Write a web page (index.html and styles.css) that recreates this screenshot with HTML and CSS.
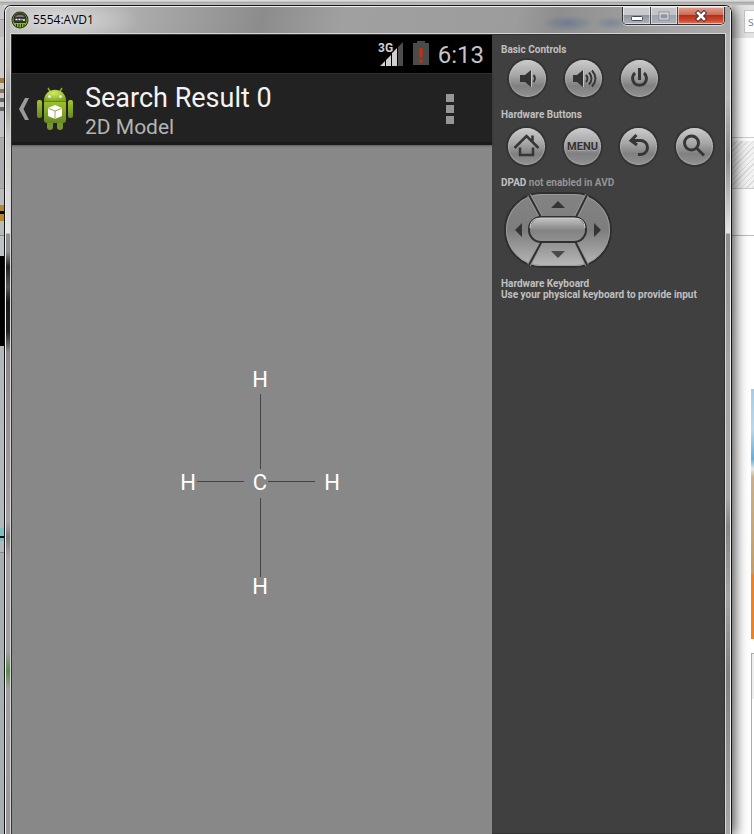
FILE: index.html
```html
<!DOCTYPE html>
<html lang="en">
<head>
<meta charset="utf-8">
<title>5554:AVD1</title>
<link rel="stylesheet" href="styles.css">
</head>
<body>
<div class="desktop">
  <div class="behind-top"></div>
  <div class="behind-left"></div>
  <main class="window">
    <div class="frame">
      <header class="titlebar">
        <svg class="app-icon" viewBox="0 0 18 18" aria-hidden="true">
          <circle cx="9" cy="9" r="8.5" fill="#26350c"/>
          <circle cx="9" cy="9" r="7.5" fill="#86b82a"/>
          <path d="M2.500 11V7.500a6.500 5.700 0 0 1 13 0V11z" fill="#333"/>
          <path d="M4 6a5.500 4 0 0 1 10 0z" fill="#777"/>
          <path d="M4.500 8.500h2M7.500 8.500h2M10.500 8.500h1M12 9h2" stroke="#fff" stroke-width="1.500"/>
          <path d="M3 11.500h12M5.500 13v3M8 13v3.500M10.500 13v3.500M13 13v3" stroke="#26350c" stroke-width="1"/>
        </svg>
        <h1 class="window-title">5554:AVD1</h1>
        <div class="window-buttons">
          <button class="wb wb-min" aria-label="Minimize"><svg viewBox="0 0 14 12"><rect x="1.500" y="6.500" width="11" height="4" rx="1" fill="#fff" stroke="#444b58"/></svg></button>
          <button class="wb wb-max" aria-label="Maximize"><svg viewBox="0 0 14 12"><rect x="2" y="2" width="10" height="8" fill="none" stroke="#858b95"/><rect x="3" y="3" width="8" height="6" fill="none" stroke="#d5d7db"/><rect x="5" y="5" width="4" height="2" fill="none" stroke="#858b95"/></svg></button>
          <button class="wb wb-close" aria-label="Close"><svg viewBox="0 0 14 12"><path d="M4 3l6 6M10 3l-6 6" stroke="#46313a" stroke-width="4.500" stroke-linecap="square"/><path d="M4 3l6 6M10 3l-6 6" stroke="#fff" stroke-width="2.500" stroke-linecap="square"/></svg></button>
        </div>
      </header>
      <div class="client">
        <section class="phone">
          <div class="statusbar">
            <svg class="signal" viewBox="0 0 26 26" aria-label="3G signal">
              <path d="M25 1v24h-5V6z" fill="#4d4d4d"/>
              <path d="M2 25l5-5v5zM8 25v-6l5-5v11zM14 25V12l5-5v18z" fill="#cfcfcf"/>
              <text x="0" y="11" class="signal-text">3G</text>
            </svg>
            <svg class="battery" viewBox="0 0 16 24" aria-label="Battery empty">
              <path d="M4 0h8v2h4v22H0V2h4z" fill="#4b4b4b"/>
              <path d="M6.500 7h3v9.500h-3zM6.500 18.500h3v3h-3z" fill="#cf2c07"/>
            </svg>
            <span class="clock">6:13</span>
          </div>
          <div class="actionbar">
            <button class="up" aria-label="Navigate up">
              <svg class="chevron" viewBox="0 0 10 22"><path d="M6 0h4L4.500 11 10 22H6L0 11z" fill="#9b9b9b"/></svg>
              <svg class="droid" viewBox="0 0 36 44">
                <defs>
                  <linearGradient id="g" x1="0" y1="0" x2="0" y2="1"><stop offset="0" stop-color="#a0c62c"/><stop offset="1" stop-color="#668823"/></linearGradient>
                  <radialGradient id="h" cx=".45" cy=".3" r=".7"><stop offset="0" stop-color="#d3ea62"/><stop offset="1" stop-color="#82aa26"/></radialGradient>
                </defs>
                <path d="M11 1l3 5M25 1l-3 5" stroke="#8aaa2f" stroke-width="1.500"/>
                <rect x="10" y="32" width="6" height="11" rx="3" fill="#76962b"/>
                <rect x="20" y="32" width="6" height="11" rx="3" fill="#76962b"/>
                <rect x="0" y="13" width="5" height="18" rx="2" fill="url(#g)"/>
                <rect x="31" y="13" width="5" height="18" rx="2" fill="url(#g)"/>
                <rect x="7" y="13" width="22" height="23" rx="3" fill="url(#g)"/>
                <path d="M7 14C7 -1 29 -1 29 14z" fill="url(#h)"/>
                <path d="M7 14.500h22" stroke="#668225"/>
                <circle cx="12.500" cy="9.500" r="1.200" fill="#fff"/><circle cx="23.500" cy="9.500" r="1.200" fill="#fff"/>
                <path d="M18 18l7 3v8l-7 3-7-3v-8z" fill="#fff"/>
                <path d="M11.500 21.500L18 24l6.500-2.500M18 24v8" stroke="#93ab58" fill="none"/>
              </svg>
            </button>
            <div class="titles">
              <h2 class="title">Search Result 0</h2>
              <p class="subtitle">2D Model</p>
            </div>
            <button class="overflow" aria-label="More options"><span></span><span></span><span></span></button>
          </div>
          <div class="canvas">
            <svg class="molecule" viewBox="0 0 480 480" aria-label="Methane structure">
              <path d="M248.500 249v75M248.500 353v79M185 336.500h47M256 336.500h47" stroke="#444" fill="none"/>
              <text x="248" y="242">H</text>
              <text x="248" y="345">C</text>
              <text x="176" y="345">H</text>
              <text x="320" y="345">H</text>
              <text x="248" y="449">H</text>
            </svg>
          </div>
        </section>
        <aside class="controls">
          <h3>Basic Controls</h3>
          <div class="row">
            <button class="key" aria-label="Volume down"><svg viewBox="0 0 37 37"><path d="M11 15h5l6-5v17l-6-5h-5z" fill="#333"/><path d="M22.500 10v17" stroke="#c6c6c6"/><path d="M24.500 15q3 3.500 0 7" class="ln"/></svg></button>
            <button class="key" aria-label="Volume up"><svg viewBox="0 0 37 37"><path d="M8 15h4l6-5v17l-6-5H8z" fill="#333"/><path d="M18.500 10v17" stroke="#c6c6c6"/><path d="M21 15q3 3.500 0 7M24 12.500q5 6 0 12M27 10.500q7 8 0 16" class="ln"/></svg></button>
            <button class="key" aria-label="Power"><svg viewBox="0 0 37 37"><path d="M14 13a7 7 0 1 0 9 0M18.500 8v12" class="ln bold"/></svg></button>
          </div>
          <h3>Hardware Buttons</h3>
          <div class="row">
            <button class="key" aria-label="Home"><svg viewBox="0 0 37 37"><path d="M6.500 20L18.500 8 30.500 20M24.500 7.500v6M12 19.500v7.500h13v-7.500" class="ln heavy"/></svg></button>
            <button class="key key-menu">MENU</button>
            <button class="key" aria-label="Back"><svg viewBox="0 0 37 37"><path d="M16.500 7L11 12.500l6 4.500M11 12.500h9.500a7 7 0 0 1 0 14H18" class="ln bold"/></svg></button>
            <button class="key" aria-label="Search"><svg viewBox="0 0 37 37"><circle cx="15.500" cy="15" r="7" class="ln bold"/><path d="M20.500 20l7.500 7.500" class="ln bold"/></svg></button>
          </div>
          <h3>DPAD <span class="dim">not enabled in AVD</span></h3>
          <svg class="dpad" viewBox="504 192 108 76" aria-label="Directional pad">
            <defs>
              <linearGradient id="p" x1="0" y1="0" x2="0" y2="1"><stop offset="0" stop-color="#838383"/><stop offset=".5" stop-color="#7d7d7d"/><stop offset="1" stop-color="#b9b9b9"/></linearGradient>
              <linearGradient id="c" x1="0" y1="0" x2="0" y2="1"><stop offset="0" stop-color="#c9c9c9"/><stop offset=".55" stop-color="#828282"/><stop offset="1" stop-color="#929292"/></linearGradient>
            </defs>
            <rect x="505" y="193" width="106" height="74" rx="37" fill="url(#p)" stroke="#2e2e2e" stroke-width="2"/>
            <rect x="506.500" y="194.500" width="103" height="71" rx="35.500" fill="none" stroke="#9a9a9a"/>
            <path d="M529 195l13 24M587 195l-12 24M542 241l-13 24M575 241l12 24" stroke="#979797" stroke-width="4"/>
            <path d="M529 195l13 24M587 195l-12 24M542 241l-13 24M575 241l12 24" stroke="#303030" stroke-width="2"/>
            <rect x="529" y="217" width="57" height="25" rx="12" fill="url(#c)" stroke="#303030" stroke-width="2"/>
            <path d="M530 228q0-10 11-10h33q11 0 11 10" fill="none" stroke="#d0d0d0"/>
            <path d="M551 208h14l-7-7zM515 230l7-7v14zM601 230l-7-7v14z" fill="#343434"/><path d="M551 251h14l-7 7z" fill="#4a4a4a"/>
          </svg>
          <h3>Hardware Keyboard</h3>
          <p>Use your physical keyboard to provide input</p>
        </aside>
      </div>
    </div>
  </main>
  <div class="behind-right">
    <div class="browser-bar"><input class="search" aria-label="Search box" value="s"></div>
    <div class="blank"></div>
    <div class="hatch"></div>
    <div class="rule"></div>
    <div class="content">
      <div class="photo"></div>
      <div class="card"></div>
    </div>
  </div>
</div>
</body>
</html>
```

FILE: styles.css
```css
* { box-sizing: border-box; }
body { margin: 0; overflow: hidden; font-family: Roboto, "Liberation Sans", sans-serif; background: #fff; }
h1, h2, h3, p { margin: 0; font-weight: 400; }
button { padding: 0; border: 0; background: none; font: inherit; color: inherit; }
svg { display: block; }

.desktop { display: grid; grid-template-columns: 4px minmax(0, 1fr) 22px; grid-template-rows: 5px minmax(0, 1fr); min-height: 100vh; }
.behind-top { position: relative; z-index: 2; grid-column: 1 / 4; background: linear-gradient(#d9dbd9 0 1px, #c9cbc9 1px 2px, #a5a6a5 2px 3px, #b7b8b7 3px); }
.behind-left {
  position: relative; z-index: 2;
  background: linear-gradient(#c8c8c8 0 14px, #a0a0a0 14px 15px, #bcbcbc 15px 32px, #c9cbcc 32px 73px,
    #9c7a42 73px 78px, #c9cbcc 78px 84px, #8d7358 84px 88px, #c9cbcc 88px 93px, #666 93px 97px, #c9cbcc 97px 102px,
    #666 102px 106px, #c0c2c3 106px 132px, #999 132px 133px, #a9abac 133px 183px, #999 183px 184px, #b9bcbd 184px 200px,
    #b88828 200px 206px, #000 206px 209px, #b88828 209px 216px, #b9bcbd 216px 230px, #888 230px 231px, #c0c3c5 231px 251px,
    #000 251px 341px, #b3b8ba 341px 523px, #7cc0c4 523px 531px, #111 531px 533px, #7cc0c4 533px 536px,
    #b3b8ba 536px 547px, #888 547px 548px, #a8afb0 548px);
}

/* window chrome */
.window { position: relative; z-index: 1; display: flex; border: 1px solid #141414; border-bottom: 0; border-radius: 7px 7px 0 0; box-shadow: 2px 2px 14px rgba(0, 0, 0, .8); }
.frame {
  flex: 1; min-width: 0; display: flex; flex-direction: column; padding: 0 4px;
  border: 1px solid #efefef; border-bottom: 0; border-radius: 6px 6px 0 0;
  background:
    linear-gradient(#b8b8b8 0, #b9b5b0 60px, #989898 90px, #c8c8c5 130px, #e4e4e4 226px, #929292 227px, #8b8b8b 245px, #222 260px, #555 280px, #181818 295px, #222 325px, #888 345px, #a2a2a2 515px, #777 530px, #a2a2a2 550px, #a0a0a0 645px, #5c8a4c 664px, #a0a0a0 682px, #969696) left / 5px 100% no-repeat,
    linear-gradient(#aaa 0, #b9b9b9 90px, #8c8c8c 150px, #e6e6e6 226px, #8f8f8f 227px, #a4a4a4 360px, #a8a8a8 490px, #868686 520px, #a5a5a5 590px, #808080 665px, #a6a6a6) right / 5px 100% no-repeat,
    #999;
}
.titlebar {
  height: 26px; display: flex; align-items: center; gap: 4px; padding: 0 0 0 1px; margin: 0 -4px 0 0;
  background:
    radial-gradient(ellipse 26px 8px at 558px 16px, rgba(75, 105, 145, .5), transparent),
    radial-gradient(ellipse 18px 7px at 602px 16px, rgba(75, 105, 145, .35), transparent),
    radial-gradient(ellipse 80px 24px at 50px 13px, rgba(255, 255, 255, .55), transparent),
    linear-gradient(100deg, #b8b8b8, #b0b0b0 110px, #8c8c8c 250px, #a0a0a0 330px, #9c9c9c 500px, #8e8e8e 540px, #a6a6a6 660px, #aaa);
}
.app-icon { width: 18px; height: 18px; }
.window-title { flex: 1; font-family: "Open Sans", "Noto Sans", sans-serif; font-size: 12px; line-height: 16px; color: #000; }
.window-buttons { align-self: flex-start; display: flex; margin-right: 5px; border: 1px solid #33343a; border-top: 0; border-radius: 0 0 5px 5px; overflow: hidden; box-shadow: 0 1px 0 rgba(255, 255, 255, .6); }
.wb { height: 17px; display: flex; align-items: center; justify-content: center; box-shadow: inset 0 0 0 1px rgba(255, 255, 255, .5); }
.wb svg { width: 14px; height: 12px; }
.wb-min { width: 28px; background: linear-gradient(#c9cacd 0 45%, #8f949e 50%, #b0b4bc); border-right: 1px solid #44464c; }
.wb-max { width: 27px; background: linear-gradient(#c4c5c9 0 45%, #9ea2ab 50%, #b0b4bc); border-right: 1px solid #44464c; }
.wb-close { width: 46px; background: linear-gradient(#e0a191, #ce6c56 45%, #b5301a 50%, #ce4a30 80%, #db8160); }
.client { flex: 1; display: grid; grid-template-columns: 480px minmax(0, 1fr); border: 1px solid #d6d6d6; border-bottom: 0; box-shadow: inset 0 0 0 1px #333; padding: 1px 1px 0; background: #404040; }

/* emulated device */
.phone { display: flex; flex-direction: column; background: #888; }
.statusbar { height: 38px; display: flex; align-items: center; justify-content: flex-end; gap: 9px; padding: 2px 8px 0 0; background: #000; color: #c4c4c4; }
.signal { width: 26px; height: 26px; margin-bottom: 2px; }
.signal-text { font-size: 12px; font-weight: 700; fill: #d0d0d0; stroke: #000; stroke-width: 2px; paint-order: stroke; }
.battery { width: 16px; height: 24px; margin-bottom: 5px; }
.clock { font-size: 24px; line-height: 28px; }
.actionbar { height: 72px; display: flex; align-items: center; padding: 2px 38px 0 7px; background: #222; border-top: 1px solid #2f2f2f; border-bottom: 3px solid #191919; box-shadow: 0 1px 2px rgba(0, 0, 0, .35); }
.up { display: flex; align-items: center; gap: 8px; }
.chevron { width: 10px; height: 22px; }
.droid { width: 36px; height: 44px; }
.titles { flex: 1; padding: 4px 0 0 12px; }
.title { font-size: 27px; line-height: 31px; color: #f3f3f3; }
.subtitle { font-size: 21px; line-height: 26px; color: #b4b4b4; }
.overflow { display: grid; gap: 3px; }
.overflow span { width: 8px; height: 8px; background: #969696; }
.canvas { flex: 1; }
.molecule { width: 100%; }
.molecule text { font-size: 22px; fill: #fff; text-anchor: middle; }

/* hardware controls */
.controls { display: flex; flex-direction: column; align-items: flex-start; padding: 9px; font-size: 10px; line-height: 11px; color: #c0c0c0; }
.controls h3, .controls p { font-size: 10px; font-weight: 700; line-height: 11px; }
.dim { color: #949494; }
.row { display: flex; gap: 19px; margin: 5px 0 12px 8px; }
.row + h3 + .row { margin: 8px 0 12px 7px; }
.key { width: 37px; height: 37px; border-radius: 50%; background: linear-gradient(#cbcbcb, #a8a8a8 40%, #808080 70%, #919191); box-shadow: 0 0 0 2px #343434, inset 0 0 1px 1px rgba(220, 220, 220, .3); }
.key svg { width: 37px; height: 37px; }
.key-menu { font-size: 11px; font-weight: 700; color: #333; text-shadow: 0 1px 0 #aaa; }
.ln { fill: none; stroke: #363636; stroke-width: 2px; }
.heavy { stroke-width: 2.5px; }
.bold { stroke-width: 3px; }
.dpad { width: 108px; height: 76px; margin: 4px 0 10px 3px; }

/* page behind the window */
.behind-right { display: flex; flex-direction: column; overflow: hidden; background: #fff; }
.browser-bar { height: 33px; padding: 5px 0 0 12px; background: #e2e3e2; }
.search { width: 60px; height: 23px; padding: 0 3px; border: 1px solid #c8c8c8; background: #fff; font: 12px "Open Sans", sans-serif; color: #7b8494; }
.blank { height: 100px; border-bottom: 1px solid #ccc; }
.hatch { height: 51px; border-top: 3px solid #fff; border-bottom: 1px solid #ccc; background: repeating-linear-gradient(135deg, #f2f2f2 0 3px, #dadada 3px 4px); }
.rule { height: 47px; border-bottom: 1px solid #bbb; }
.content { flex: 1; display: flex; flex-direction: column; gap: 14px; padding: 153px 0 0 19px; }
.photo { height: 250px; background: linear-gradient(#a5cce8, #b9d8ee 40px, #62aed8 70px, #e6e8e8 80px, #cbb08c 88px, #c79d62 184px, #f08020 186px); }
.card { flex: 1; border: 1px solid #aaa; border-width: 1px 0 0 1px; background: linear-gradient(#eee 45px, #fff 45px); }
```
